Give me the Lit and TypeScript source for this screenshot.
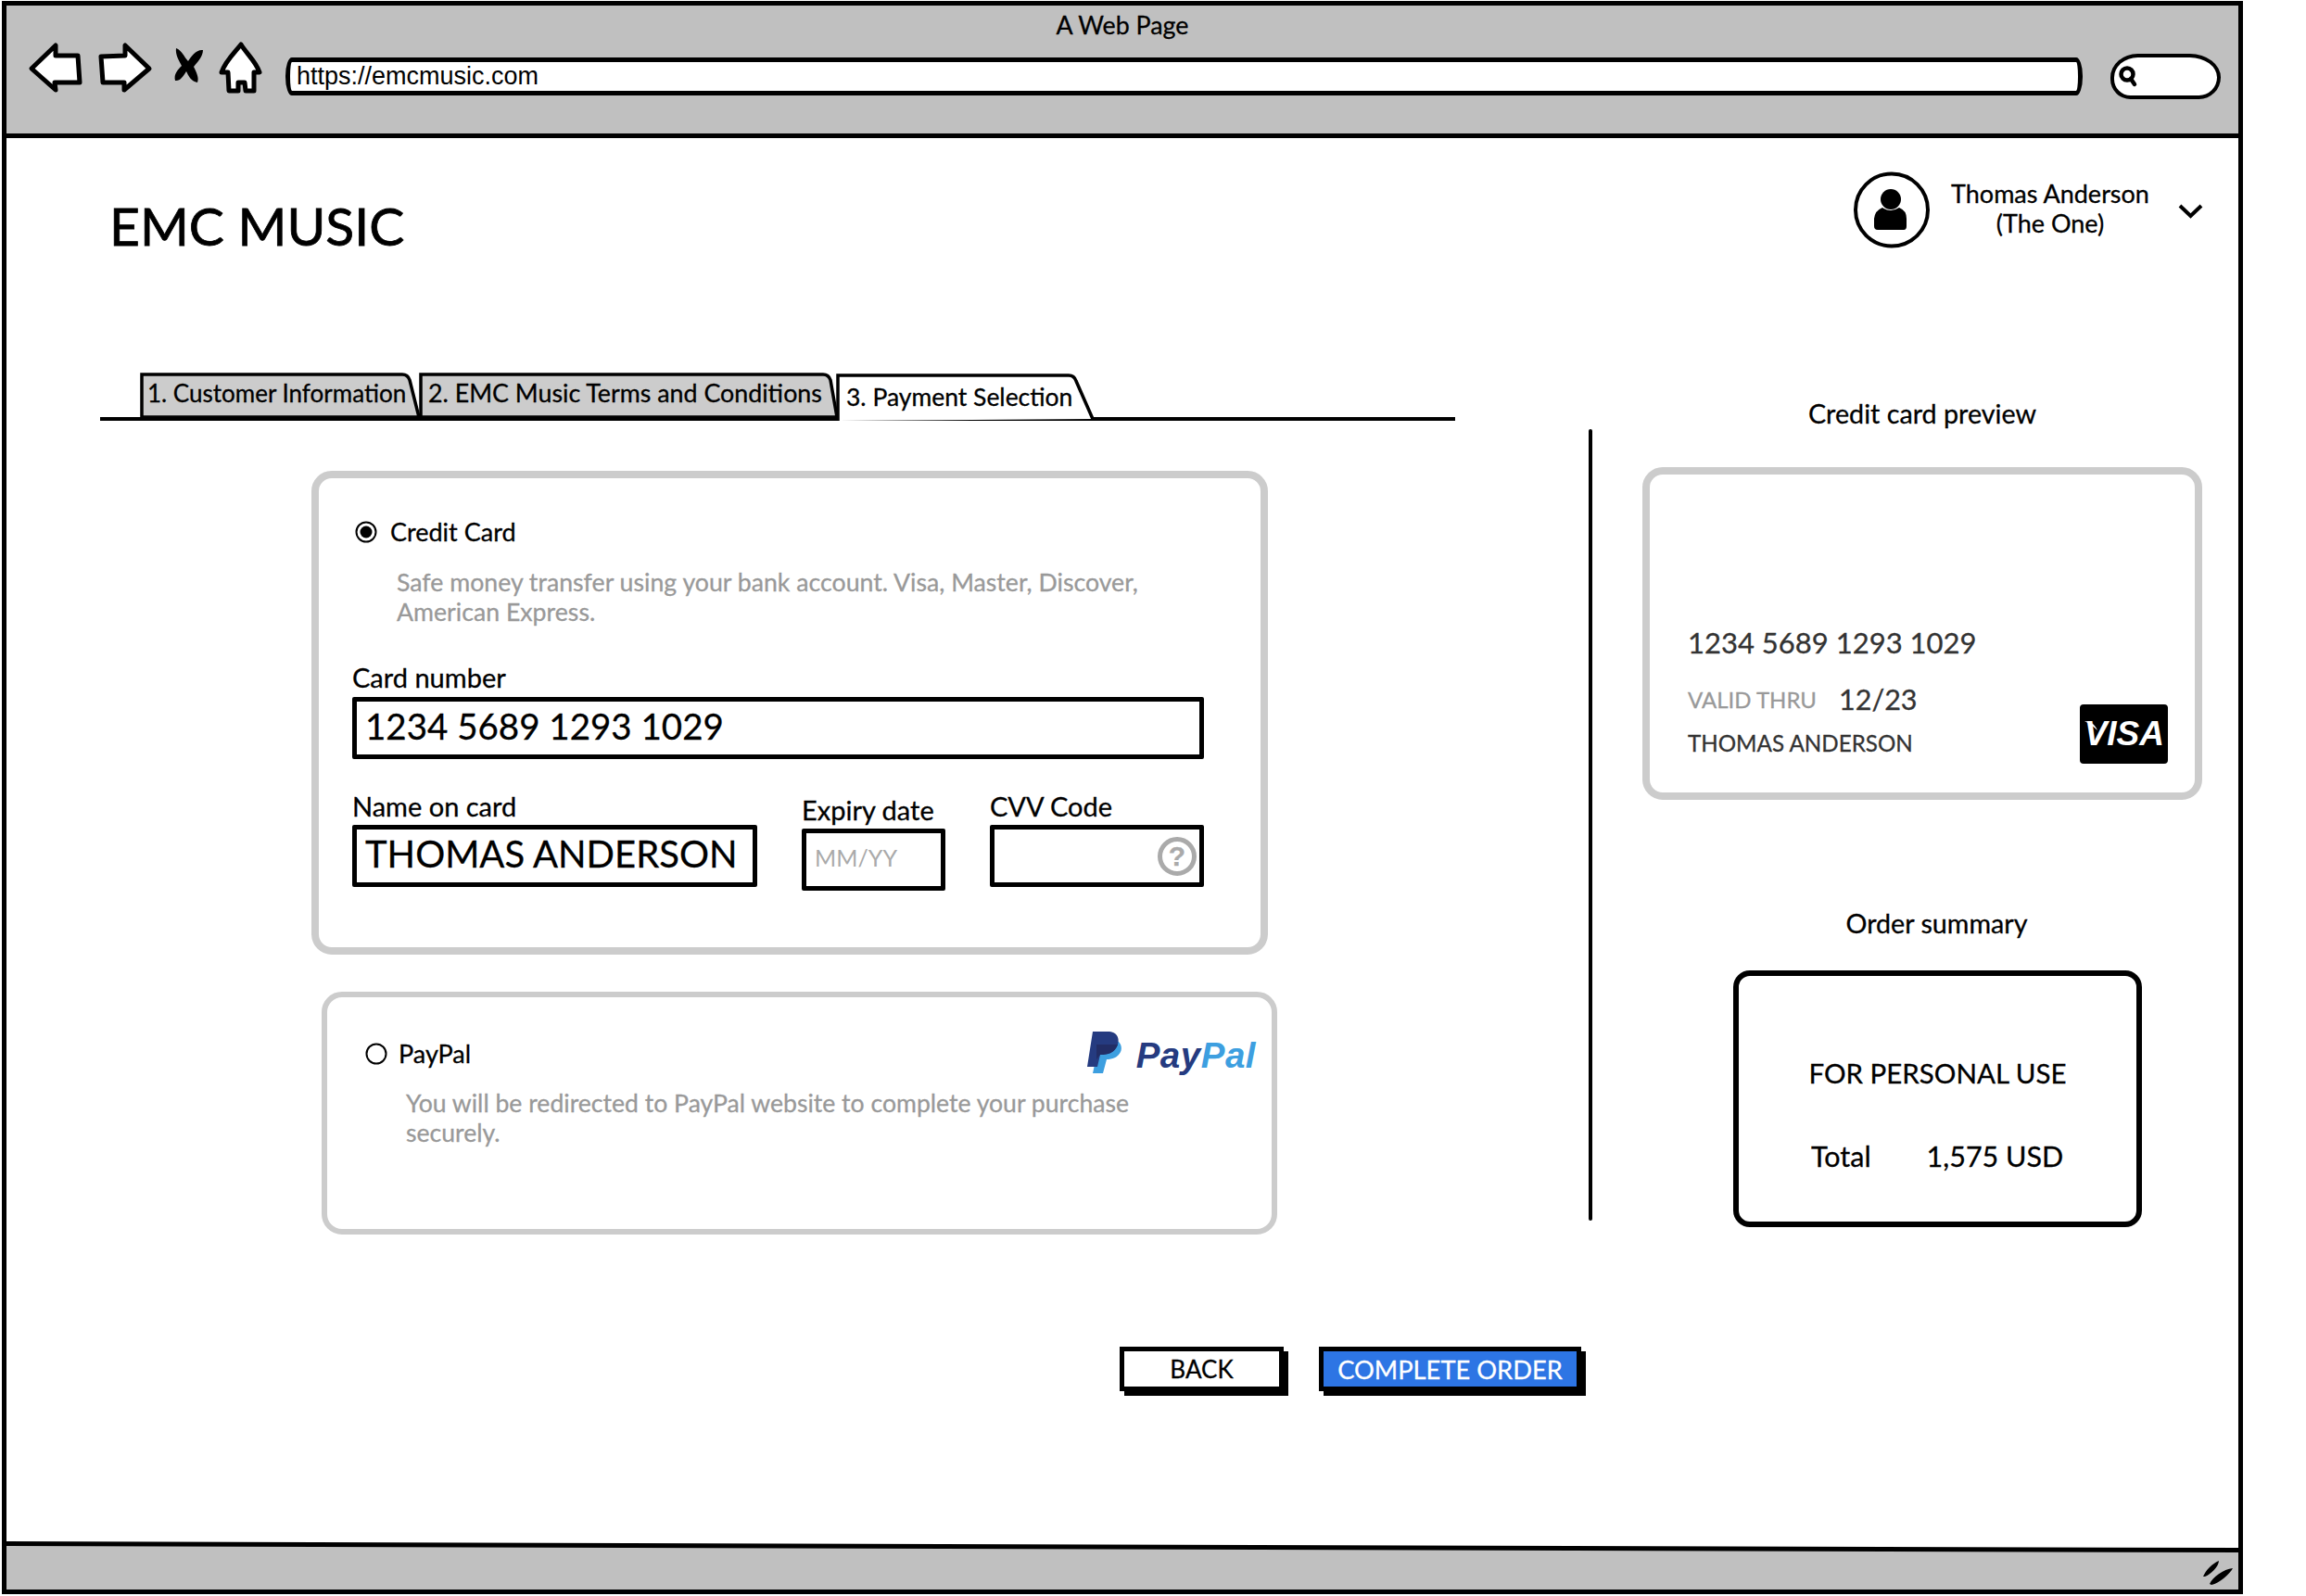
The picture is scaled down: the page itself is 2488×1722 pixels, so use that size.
import { LitElement, html, css } from "lit";
import { customElement } from "lit/decorators.js";

@customElement("app-root")
export class AppRoot extends LitElement {
  static styles = css`
    :host { display: block; width: 2488px; height: 1722px; background: #fff; font-family: Lato, "Noto Sans", sans-serif; color: #000; font-size: 27px; overflow: hidden; -webkit-text-stroke: 0.3px currentColor; }
    * { box-sizing: border-box; }
    svg { display: block; flex: none; overflow: visible; }
    .page { margin: 1px 0 0 2px; width: 2418px; height: 1719px; border: 5px solid #000; display: flex; flex-direction: column; }
    .chrome { height: 143px; flex: none; background: #c0c0c0; border-bottom: 5px solid #000; }
    .win-title { padding-top: 6px; line-height: 30px; text-align: center; font-size: 26.8px; }
    .toolbar { height: 80px; display: flex; align-items: center; padding: 0 19px 0 25px; }
    .nav { display: flex; align-items: center; margin-bottom: 18px; flex: none; }
    .i-fwd { margin-left: 19px; }
    .i-x { margin: -4px 0 0 23px; }
    .i-home { margin-left: 17px; }
    .url { flex: 1; margin: 0 30px 0 26px; height: 41px; background: #fff; border: 5px solid #000; border-radius: 7px / 20px; padding-left: 7px; display: flex; align-items: center; font: 27px "Liberation Sans", sans-serif; -webkit-text-stroke: 0; }
    .search { width: 119px; height: 49px; background: #fff; border: 4.5px solid #000; border-radius: 30px 34px 24px 22px / 26px 26px 24px 22px; display: flex; align-items: center; padding-left: 5px; }
    .main { flex: 1; min-height: 0; }
    .top { height: 253px; padding: 37px 38px 0 111px; display: flex; justify-content: space-between; align-items: flex-start; }
    .brand { margin-top: 22px; font-size: 57px; line-height: 70px; -webkit-text-stroke: 0.8px #000; }
    .user { display: flex; align-items: center; }
    .who { width: 218px; margin: 0 29px 0 21px; text-align: center; line-height: 32px; font-size: 27px; position: relative; top: -2px; }
    .chev { position: relative; top: 1px; }
    .body { display: flex; padding-left: 101px; }
    .left { width: 1606px; flex: none; }
    .tabs { width: 1462px; height: 52px; border-bottom: 4px solid #000; display: flex; padding-left: 43px; }
    .tab { position: relative; flex: none; height: 48px; line-height: 44px; }
    .tab svg { position: absolute; left: 0; top: 0; }
    .tab span { position: relative; }
    .t1 { width: 301px; padding-left: 8px; font-size: 26px; }
    .t2 { width: 451px; padding-left: 10px; font-size: 26.8px; }
    .t3 { width: 278px; height: 52px; padding: 4px 0 0 10px; font-size: 26.5px; }
    .panel { background: #fff; border: 8px solid #ccc; border-radius: 22px; }
    .cc { margin: 54px 0 0 228px; width: 1032px; height: 522px; padding: 42px 0 0 36px; }
    .radio-row { display: flex; align-items: center; height: 32px; line-height: 32px; }
    .cc .radio-row { margin-left: 3px; gap: 14px; }
    .desc { color: #999; line-height: 32px; font-size: 26.7px; }
    .cc .desc { margin: 22px 0 0 48px; width: 830px; }
    .lbl { display: block; line-height: 32px; font-size: 29px; }
    .inp { border: 5.5px solid #000; border-radius: 2px; background: #fff; display: flex; align-items: center; height: 67px; padding: 0 0 5px 9px; font-size: 38.5px; }
    .num { margin-top: 39px; }
    .num .inp { margin-top: 5px; width: 919px; }
    .row2 { margin-top: 35px; display: flex; gap: 48px; align-items: flex-start; }
    .row2 .inp { margin-top: 4px; font-size: 40px; }
    .f-name { width: 437px; }
    .f-exp { width: 155px; margin-top: 4px; }
    .f-cvv { width: 231px; }
    .f-cvv .inp { justify-content: flex-end; padding: 0 3px 0 0; }
    .row2 .ph { color: #aaa; font-size: 25px; -webkit-text-stroke: 0; }
    .help { width: 42px; height: 42px; border: 5px solid #aaa; border-radius: 50%; color: #aaa; font: 700 30px/32px "Liberation Sans", sans-serif; text-align: center; }
    .pp { margin: 40px 0 0 239px; width: 1031px; height: 262px; border-width: 6px; padding: 45px 17px 0 41px; }
    .pp .radio-row { justify-content: space-between; }
    .pp-l { display: flex; align-items: center; gap: 12px; }
    .pp .desc { margin: 21px 0 0 44px; width: 800px; font-size: 26.6px; }
    .logo { display: flex; align-items: flex-end; gap: 14px; height: 45px; margin-top: -4px; -webkit-text-stroke: 0; }
    .logo-t { font: italic 700 38.5px/38px "Liberation Sans", sans-serif; color: #253b80; letter-spacing: 0.5px; }
    .logo-t i { color: #3d9fe0; }
    .btns { margin: 121px 0 0 1100px; display: flex; gap: 38px; }
    .btn { height: 48px; border: 5px solid #000; box-shadow: 5px 5px 0 #000; display: flex; align-items: center; justify-content: center; font-size: 26px; }
    .b1 { width: 177px; background: #fff; }
    .b2 { width: 283px; background: #2d75e4; color: #fff; font-size: 27.3px; }
    .divider { flex: none; width: 4px; height: 854px; margin-top: 61px; background: #000; border-radius: 2px; }
    .right { flex: 1; padding: 28px 0 0 54px; }
    .r-title { line-height: 32px; text-align: center; font-size: 28.7px; }
    .t-prev { width: 604px; }
    .card { margin-top: 42px; width: 604px; height: 359px; padding: 161px 29px 0 41px; color: #333; }
    .card-num { font-size: 31px; line-height: 40px; }
    .card-bot { margin-top: 21px; display: flex; justify-content: space-between; align-items: flex-start; }
    .valid { display: flex; align-items: center; height: 40px; gap: 24px; font-size: 30.5px; }
    .valid small { color: #999; font-size: 24px; }
    .holder { margin-top: 12px; line-height: 32px; font-size: 24.2px; }
    .visa { position: relative; width: 95px; height: 64px; margin-top: 26px; background: #000; border-radius: 4px; color: #fff; font: italic 700 37px/64px "Liberation Sans", sans-serif; text-align: right; padding-right: 4px; -webkit-text-stroke: 0; }
    .visa svg { position: absolute; left: 5px; top: 18px; }
    .t-ord { width: 439px; margin: 117px 0 0 98px; }
    .summary { margin: 35px 0 0 98px; width: 441px; height: 277px; border: 6px solid #000; border-radius: 18px; padding-top: 87px; font-size: 30px; }
    .sum-h { line-height: 36px; text-align: center; font-size: 29.5px; }
    .sum-t { margin-top: 53px; padding-left: 78px; display: flex; gap: 60px; line-height: 36px; font-size: 30.5px; }
    .foot { flex: none; height: 52px; margin-top: auto; background: #000; clip-path: polygon(0 0, 100% 7px, 100% 100%, 0 100%); padding-top: 5px; }
    .foot-in { height: 100%; background: #c0c0c0; clip-path: polygon(0 0, 100% 7px, 100% 100%, 0 100%); display: flex; justify-content: flex-end; align-items: flex-end; padding: 0 6px 5px 0; }
  `;

  render() {
    return html`<div class="page">
      <div class="chrome">
        <div class="win-title">A Web Page</div>
        <div class="toolbar">
          <div class="nav">
            <svg width="55" height="52" viewBox="0 0 55 52"><path d="M2 27L28 2L28 13L52 13L54 42L27 42L28 50Z" fill="#fff" stroke="#000" stroke-width="5" stroke-linejoin="round"/></svg>
            <svg class="i-fwd" width="57" height="52" viewBox="0 0 57 52"><path d="M55 27L29 2L29 13L3 14L5 42L28 42L28 50Z" fill="#fff" stroke="#000" stroke-width="5" stroke-linejoin="round"/></svg>
            <svg class="i-x" width="34" height="38" viewBox="0 0 34 38"><path d="M4 0C10 2 13 10 17 14C20 9 26 1 33 2C33 9 27 15 23 20C26 26 29 32 27 37C20 36 17 29 15 25C12 30 8 36 3 35C1 28 6 23 10 19C7 13 3 7 4 0Z" fill="#000"/></svg>
            <svg class="i-home" width="45" height="54" viewBox="0 0 45 54"><path d="M23 2C29 12 39 20 43 32L37 32L37 52L28 52L27 43L20 43L20 52L10 52L9 32L2 32C6 20 15 12 23 2Z" fill="#fff" stroke="#000" stroke-width="5" stroke-linejoin="round"/></svg>
          </div>
          <div class="url">https://emcmusic.com</div>
          <div class="search">
            <svg width="20" height="22" viewBox="0 0 20 22"><circle cx="9" cy="9" r="6.5" fill="none" stroke="#000" stroke-width="4.5"/><path d="M13 14L17 20" stroke="#000" stroke-width="4.5" stroke-linecap="round"/></svg>
          </div>
        </div>
      </div>
      <div class="main">
        <div class="top">
          <div class="brand">EMC MUSIC</div>
          <div class="user">
            <svg width="82" height="81" viewBox="0 0 82 81"><ellipse cx="41" cy="40.500" rx="39" ry="39" fill="#fff" stroke="#000" stroke-width="4"/><path d="M22 62Q22 55 22 50Q23 41 31 38Q40 44 49 38Q57 41 57 50V58Q57 62 54 62H26Q22 62 22 58Z" fill="#000"/><circle cx="40" cy="29" r="11" fill="#000"/></svg>
            <div class="who">Thomas Anderson<br />(The One)</div>
            <svg class="chev" width="27" height="17" viewBox="0 0 27 17"><path d="M2 3L13.500 14L25 3" fill="none" stroke="#000" stroke-width="4"/></svg>
          </div>
        </div>
        <div class="body">
          <div class="left">
            <div class="tabs">
              <div class="tab t1"><svg width="301" height="48" viewBox="0 0 301 48"><path d="M2 48V2H283Q289 2 291 8L301 48Z" fill="#ccc" stroke="#000" stroke-width="3.500"/></svg><span>1. Customer Information</span></div>
              <div class="tab t2"><svg width="451" height="48" viewBox="0 0 451 48"><path d="M2 48V2H436Q442 2 444 8L451 48Z" fill="#ccc" stroke="#000" stroke-width="3.500"/></svg><span>2. EMC Music Terms and Conditions</span></div>
              <div class="tab t3"><svg width="278" height="52" viewBox="0 0 278 52"><path d="M1 52V3H250Q256 3 258 9L276 50" fill="#fff" stroke="#000" stroke-width="3.500"/></svg><span>3. Payment Selection</span></div>
            </div>
            <div class="panel cc">
              <div class="radio-row">
                <svg width="24" height="24" viewBox="0 0 24 24"><circle cx="12" cy="12" r="10.500" fill="#fff" stroke="#000" stroke-width="2"/><circle cx="12" cy="12" r="6.500" fill="#000"/></svg>
                <span>Credit Card</span>
              </div>
              <div class="desc">Safe money transfer using your bank account. Visa, Master, Discover, American Express.</div>
              <div class="num">
                <span class="lbl">Card number</span>
                <div class="inp">1234 5689 1293 1029</div>
              </div>
              <div class="row2">
                <div class="f-name"><span class="lbl">Name on card</span><div class="inp">THOMAS ANDERSON</div></div>
                <div class="f-exp"><span class="lbl">Expiry date</span><div class="inp"><span class="ph">MM/YY</span></div></div>
                <div class="f-cvv"><span class="lbl">CVV Code</span><div class="inp"><div class="help">?</div></div></div>
              </div>
            </div>
            <div class="panel pp">
              <div class="radio-row">
                <div class="pp-l">
                  <svg width="24" height="24" viewBox="0 0 24 24"><circle cx="12" cy="12" r="10.500" fill="#fff" stroke="#000" stroke-width="2"/></svg>
                  <span>PayPal</span>
                </div>
                <div class="logo">
                  <svg width="39" height="45" viewBox="0 0 39 45"><path d="M12 9H30C37 11 38 18 36 22C33 28 27 30 21 30L17 45H6L9 31Z" fill="#3d9fe0"/><path d="M6 0H22C33 0 35 8 33 14C30 23 22 25 14 25L11 38H0Z" fill="#253b80"/><path d="M10 14H33C30 23 22 25 14 25L10 30Z" fill="#222d65"/></svg>
                  <span class="logo-t">Pay<i>Pal</i></span>
                </div>
              </div>
              <div class="desc">You will be redirected to PayPal website to complete your purchase securely.</div>
            </div>
            <div class="btns">
              <div class="btn b1">BACK</div>
              <div class="btn b2">COMPLETE ORDER</div>
            </div>
          </div>
          <div class="divider"></div>
          <div class="right">
            <div class="r-title t-prev">Credit card preview</div>
            <div class="panel card">
              <div class="card-num">1234 5689 1293 1029</div>
              <div class="card-bot">
                <div>
                  <div class="valid"><small>VALID THRU</small><span>12/23</span></div>
                  <div class="holder">THOMAS ANDERSON</div>
                </div>
                <div class="visa"><svg width="14" height="10" viewBox="0 0 14 10"><path d="M0 0C6 0 11 3 14 10C10 6 6 3 0 0Z" fill="#fff"/></svg>VISA</div>
              </div>
            </div>
            <div class="r-title t-ord">Order summary</div>
            <div class="summary">
              <div class="sum-h">FOR PERSONAL USE</div>
              <div class="sum-t"><span>Total</span><span>1,575 USD</span></div>
            </div>
          </div>
        </div>
      </div>
      <div class="foot"><div class="foot-in">
        <svg width="32" height="26" viewBox="0 0 32 26"><path d="M0 17C3 10 10 3 17 0C17 6 8 15 2 17Z M7 25C10 18 22 9 32 8C29 14 18 24 9 26Z" fill="#000"/></svg>
      </div></div>
    </div>`;
  }
}
